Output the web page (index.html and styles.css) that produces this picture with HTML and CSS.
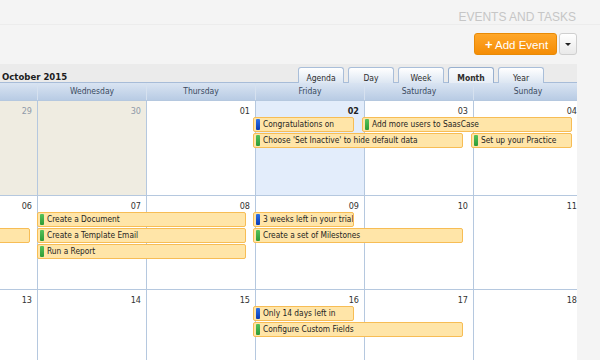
FILE: index.html
```html
<!DOCTYPE html>
<html lang="en">
<head>
    <meta charset="UTF-8">
    <meta name="viewport" content="width=device-width, initial-scale=1.0">
    <title>Events and Tasks</title>
    <link rel="stylesheet" href="styles.css">
</head>
<body>
    <div class="top">
        <h1 class="page-title">EVENTS AND TASKS</h1>
    </div>

    <div class="toolbar">
        <div class="btn-group">
            <button class="btn-add"><span class="plus">+</span> Add Event</button>
            <button class="btn-caret"><span class="caret"></span></button>
        </div>
    </div>

    <div class="panel">
        <div class="panel-bar">
            <span class="month-title">October 2015</span>
            <div class="tabs">
                <span class="tab">Agenda</span>
                <span class="tab">Day</span>
                <span class="tab">Week</span>
                <span class="tab active">Month</span>
                <span class="tab">Year</span>
            </div>
        </div>

        <div class="cal">
            <div class="day-names">
                <div>Monday</div>
                <div>Tuesday</div>
                <div>Wednesday</div>
                <div>Thursday</div>
                <div>Friday</div>
                <div>Saturday</div>
                <div>Sunday</div>
            </div>

            <!-- week 1 -->
            <div class="week w1">
                <div class="cell other c1">28</div>
                <div class="cell other c2">29</div>
                <div class="cell other c3">30</div>
                <div class="cell c4">01</div>
                <div class="cell today c5">02</div>
                <div class="cell c6">03</div>
                <div class="cell c7">04</div>

                <div class="ev blue r2 s5 e6">Congratulations on</div>
                <div class="ev green r2 s6 e8">Add more users to SaasCase</div>
                <div class="ev green r3 s5 e7">Choose 'Set Inactive' to hide default data</div>
                <div class="ev green r3 s7 e8">Set up your Practice</div>
            </div>

            <!-- week 2 -->
            <div class="week w2">
                <div class="cell c1">05</div>
                <div class="cell c2">06</div>
                <div class="cell c3">07</div>
                <div class="cell c4">08</div>
                <div class="cell c5">09</div>
                <div class="cell c6">10</div>
                <div class="cell c7">11</div>

                <div class="ev green r3 s1 e3 tail">Add more users to SaasCase</div>
                <div class="ev green r2 s3 e5 flush">Create a Document</div>
                <div class="ev green r3 s3 e5 flush">Create a Template Email</div>
                <div class="ev green r4 s3 e5 flush">Run a Report</div>
                <div class="ev blue r2 s5 e6">3 weeks left in your trial</div>
                <div class="ev green r3 s5 e7">Create a set of Milestones</div>
            </div>

            <!-- week 3 -->
            <div class="week w3">
                <div class="cell c1">12</div>
                <div class="cell c2">13</div>
                <div class="cell c3">14</div>
                <div class="cell c4">15</div>
                <div class="cell c5">16</div>
                <div class="cell c6">17</div>
                <div class="cell c7">18</div>

                <div class="ev blue r2 s5 e6">Only 14 days left in</div>
                <div class="ev green r3 s5 e7">Configure Custom Fields</div>
            </div>
        </div>
    </div>
</body>
</html>
```

FILE: styles.css
```css
body {
    margin: 0;
    background-color: #f4f4f4;
    font-family: 'Liberation Sans', Arial, sans-serif;
    overflow: hidden;
    height: 360px;
}

/* top title */
.top {
    height: 25px;
    border-bottom: 1px solid #ececec;
    box-sizing: border-box;
}
.page-title {
    margin: 0;
    padding: 10px 24px 0 0;
    text-align: right;
    font-size: 12px;
    line-height: 14px;
    font-weight: normal;
    color: #c6c6c6;
}

/* add event button */
.toolbar {
    display: flex;
    justify-content: flex-end;
    padding: 8px 23px 9px 0;
}
.btn-group {
    display: flex;
    gap: 2px;
}
.btn-add {
    height: 22px;
    width: 83px;
    padding: 0 0 0 2px;
    border: 1px solid #e88a06;
    border-radius: 3px;
    background: linear-gradient(#ffa72a, #f58d05);
    color: white;
    font-family: 'Liberation Sans', Arial, sans-serif;
    font-size: 11.5px;
    cursor: pointer;
}
.plus {
    font-weight: bold;
    font-size: 13px;
}
.btn-caret {
    height: 22px;
    width: 18px;
    padding: 0;
    border: 1px solid #cfcfcf;
    border-radius: 3px;
    background: linear-gradient(#ffffff, #e9e9e9);
    display: flex;
    align-items: center;
    justify-content: center;
}
.caret {
    width: 0;
    height: 0;
    border-left: 3px solid transparent;
    border-right: 3px solid transparent;
    border-top: 3px solid #222;
}

/* calendar panel */
.panel {
    width: 577px;
    overflow: hidden;
    font-family: 'DejaVu Sans Condensed', 'DejaVu Sans', sans-serif;
    font-stretch: condensed;
}
.panel-bar {
    height: 18px;
    background: #ebebeb;
    display: flex;
    justify-content: space-between;
    align-items: flex-end;
    padding: 0 33px 0 2px;
}
.month-title {
    font-size: 9.5px;
    font-weight: bold;
    color: #1c1c1c;
    line-height: 12px;
    margin-bottom: -1px;
}
.tabs {
    display: flex;
    gap: 4px;
    position: relative;
    z-index: 2;
    margin-bottom: -1px;
}
.tab {
    width: 44px;
    height: 15px;
    border: 1px solid #a9bed9;
    border-bottom: none;
    border-radius: 3px 3px 0 0;
    background: linear-gradient(#ffffff, #dce6f2);
    font-size: 8.5px;
    color: #2d2d2d;
    text-align: center;
    line-height: 21px;
    overflow: hidden;
}
.tab.active {
    background: linear-gradient(#fbfcfd, #e8eef6);
    border-color: #98b0cf;
    font-weight: bold;
    line-height: 20px;
}

.cal {
    margin-left: -181px;
    width: 763px;
}
.day-names {
    display: grid;
    grid-template-columns: repeat(7, 109px);
    height: 18px;
    background: linear-gradient(#d9e4f2, #b8cbe4);
    border-top: 1px solid #a7bcd8;
    box-sizing: border-box;
}
.day-names div {
    border-left: 1px solid #d6e1ef;
    text-align: center;
    font-size: 8.5px;
    line-height: 17px;
    color: #3a4a60;
}

.week {
    display: grid;
    grid-template-columns: repeat(7, 109px);
    grid-template-rows: 16px 16px 16px 16px 1fr;
    border-top: 1px solid #b5c8df;
    background: white;
}
.w1 { height: 94px; }
.w2 { height: 93px; }
.w3 { height: 80px; }

.cell {
    grid-row: 1 / -1;
    border-left: 1px solid #b5c8df;
    text-align: right;
    padding: 4px 5px 0 0;
    font-size: 9px;
    line-height: 13px;
    color: #333;
    background: white;
}
.cell.other {
    background: #efece1;
    color: #8f9aa9;
}
.cell.today {
    background: #e3edfb;
    font-weight: bold;
    color: #222;
}
.c1 { grid-column: 1; }
.c2 { grid-column: 2; }
.c3 { grid-column: 3; }
.c4 { grid-column: 4; }
.c5 { grid-column: 5; }
.c6 { grid-column: 6; }
.c7 { grid-column: 7; }

/* events */
.ev {
    height: 15px;
    box-sizing: border-box;
    margin: 0 10px 0 -2px;
    border: 1px solid #f7bd55;
    border-radius: 2px;
    background: #ffe5a8;
    font-size: 8.3px;
    line-height: 13px;
    color: #1e1e1e;
    white-space: nowrap;
    overflow: hidden;
    padding-left: 9px;
    position: relative;
}
.ev::before {
    content: "";
    position: absolute;
    left: 2px;
    top: 1px;
    width: 4px;
    height: 11px;
    border-radius: 1px;
}
.ev.blue::before { background: linear-gradient(#2f72e6, #0b3bb4); }
.ev.green::before { background: linear-gradient(#55c25a, #2e9b36); }
.ev.flush { margin-left: 0; margin-right: 9px; }
.ev.tail { margin-right: 7px; }

.r2 { grid-row: 2; }
.r3 { grid-row: 3; }
.r4 { grid-row: 4; }
.s1 { grid-column-start: 1; }
.s3 { grid-column-start: 3; }
.s5 { grid-column-start: 5; }
.s6 { grid-column-start: 6; }
.s7 { grid-column-start: 7; }
.e3 { grid-column-end: 3; }
.e5 { grid-column-end: 5; }
.e6 { grid-column-end: 6; }
.e7 { grid-column-end: 7; }
.e8 { grid-column-end: 8; }
```
